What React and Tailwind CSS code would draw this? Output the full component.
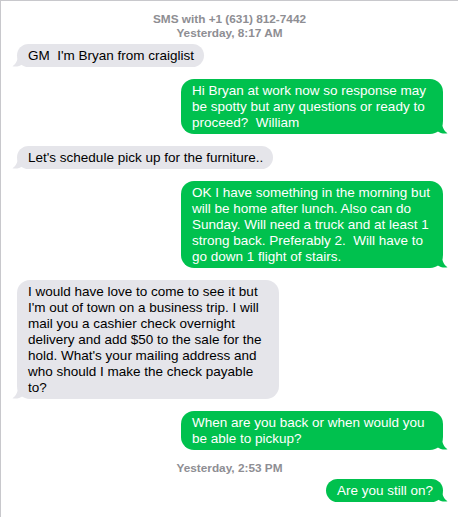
import React from "react";

const GREEN = "#00c14e";
const GRAY = "#e5e5ea";

function Tail({ side, color }) {
  if (side === "right") {
    return (
      <svg className="absolute bottom-0 right-[-5px]" width="11" height="13" viewBox="0 0 11 13">
        <path d="M0 0 L5 0 C5 6 7 10 10.5 12.3 C7 13 3 12.2 0 10 Z" fill={color} />
      </svg>
    );
  }
  return (
    <svg className="absolute bottom-0 left-[-5px]" width="11" height="13" viewBox="0 0 11 13">
      <path d="M11 0 L6 0 C6 6 4 10 0.5 12.3 C4 13 8 12.2 11 10 Z" fill={color} />
    </svg>
  );
}

function Bubble({ from, children }) {
  const mine = from === "me";
  return (
    <div className={mine ? "flex justify-end pr-[15px]" : "flex justify-start pl-[16px]"}>
      <div
        className={
          "relative max-w-[262px] rounded-[13px] pl-[11px] pr-[10px] pt-[4px] pb-[3px] text-[13.5px] leading-[16px] " +
          (mine ? "text-white" : "text-black")
        }
        style={{ backgroundColor: mine ? GREEN : GRAY }}
      >
        <Tail side={mine ? "right" : "left"} color={mine ? GREEN : GRAY} />
        <span className="relative whitespace-pre-wrap">{children}</span>
      </div>
    </div>
  );
}

export default function App() {
  return (
    <div
      className="w-[458px] h-[517px] overflow-hidden bg-white border-l border-t border-[#c8c8cc] flex flex-col"
      style={{ fontFamily: '"Liberation Sans", Arial, sans-serif' }}
    >
      <div className="pt-[11px] text-center text-[11.8px] leading-[14px] font-bold text-[#8e8e93]">
        <div>SMS with +1 (631) 812-7442</div>
        <div>Yesterday, 8:17 AM</div>
      </div>
      <div className="mt-[4px] flex flex-col gap-[12px]">
        <Bubble from="them">GM  I'm Bryan from craiglist</Bubble>
        <Bubble from="me">Hi Bryan at work now so response may be spotty but any questions or ready to proceed?  William</Bubble>
        <Bubble from="them">Let's schedule pick up for the furniture..</Bubble>
        <Bubble from="me">OK I have something in the morning but will be home after lunch. Also can do Sunday. Will need a truck and at least 1 strong back. Preferably 2.  Will have to go down 1 flight of stairs.</Bubble>
        <Bubble from="them">I would have love to come to see it but I'm out of town on a business trip. I will mail you a cashier check overnight delivery and add $50 to the sale for the hold. What's your mailing address and who should I make the check payable to?</Bubble>
        <Bubble from="me">When are you back or when would you be able to pickup?</Bubble>
      </div>
      <div className="mt-[11px] text-center text-[11.8px] leading-[14px] font-bold text-[#8e8e93]">Yesterday, 2:53 PM</div>
      <div className="mt-[4px]">
        <Bubble from="me">Are you still on?</Bubble>
      </div>
    </div>
  );
}
